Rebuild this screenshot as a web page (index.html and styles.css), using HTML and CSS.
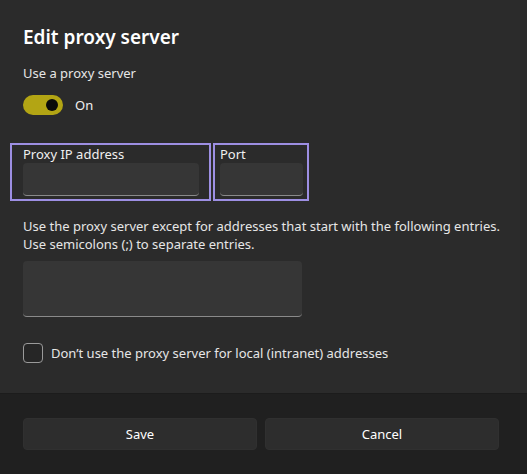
FILE: index.html
```html
<!DOCTYPE html>
<html>
<head>
<meta charset="utf-8">
<link rel="stylesheet" href="styles.css">
</head>
<body>
<div class="dialog">
  <div class="content">
    <h1 class="title">Edit proxy server</h1>
    <div class="label">Use a proxy server</div>
    <div class="toggle-row">
      <span class="toggle"><span class="knob"></span></span>
      <span class="toggle-text">On</span>
    </div>
    <div class="fields">
      <div class="field field-ip">
        <div class="field-label">Proxy IP address</div>
        <div class="input"></div>
      </div>
      <div class="field field-port">
        <div class="field-label">Port</div>
        <div class="input"></div>
      </div>
    </div>
    <p class="desc">Use the proxy server except for addresses that start with the following entries.<br>Use semicolons (;) to separate entries.</p>
    <div class="input textarea"></div>
    <div class="check-row">
      <span class="checkbox"></span>
      <span class="check-text">Don’t use the proxy server for local (intranet) addresses</span>
    </div>
  </div>
  <div class="footer">
    <div class="btn">Save</div>
    <div class="btn">Cancel</div>
  </div>
</div>
</body>
</html>
```

FILE: styles.css
```css
html, body {
  margin: 0;
  padding: 0;
  background: #2b2b2b;
}
body {
  font-family: "Noto Sans", "Open Sans", sans-serif;
  color: #ffffff;
  font-size: 13px;
}
.dialog {
  width: 527px;
  height: 474px;
  display: flex;
  flex-direction: column;
  background: #2b2b2b;
}
.content {
  flex: 1;
  padding: 22px 23px 0 23px;
  display: flex;
  flex-direction: column;
  align-items: flex-start;
}
.title {
  margin: 0;
  font-size: 19px;
  font-weight: 600;
  line-height: 30px;
  color: #ffffff;
}
.label {
  margin-top: 12px;
  line-height: 18px;
  color: #e6e6e6;
}
.toggle-row {
  margin-top: 13px;
  display: flex;
  align-items: center;
  gap: 12px;
}
.toggle {
  width: 40px;
  height: 20px;
  border-radius: 10px;
  background: #b3a514;
  display: flex;
  align-items: center;
  justify-content: flex-end;
  padding-right: 5px;
  box-sizing: border-box;
}
.knob {
  width: 12px;
  height: 12px;
  border-radius: 50%;
  background: #0a0a0a;
}
.toggle-text {
  line-height: 20px;
  color: #f0f0f0;
}
.fields {
  margin-top: 28px;
  margin-left: -13px;
  display: flex;
  gap: 2px;
}
.field {
  border: 2px solid #9d8fe3;
  display: flex;
  flex-direction: column;
  padding-bottom: 3px;
}
.field-ip {
  width: 201px;
  padding-left: 11px;
  padding-right: 10px;
  box-sizing: border-box;
}
.field-port {
  width: 96px;
  padding-left: 5px;
  padding-right: 4px;
  box-sizing: border-box;
}
.field-label {
  line-height: 18px;
  color: #f0f0f0;
}
.input {
  height: 33px;
  background: #363636;
  border-radius: 4px;
  border-bottom: 1px solid #8a8a8a;
  box-sizing: border-box;
}
.field .input {
  width: 100%;
}
.desc {
  margin: 16px 0 0 0;
  line-height: 18px;
  color: #e6e6e6;
}
.textarea {
  margin-top: 8px;
  width: 279px;
  height: 56px;
}
.check-row {
  margin-top: 26px;
  display: flex;
  align-items: center;
  gap: 8px;
}
.checkbox {
  width: 20px;
  height: 20px;
  box-sizing: border-box;
  border: 1px solid #9a9a9a;
  border-radius: 4px;
  background: #262626;
}
.check-text {
  color: #e6e6e6;
}
.footer {
  height: 81px;
  background: #202020;
  border-top: 1px solid #1c1c1c;
  box-sizing: border-box;
  display: flex;
  gap: 8px;
  padding: 24px 28px 0 23px;
}
.btn {
  flex: 1;
  height: 32px;
  border-radius: 4px;
  background: #2d2d2d;
  border: 1px solid #303030;
  box-sizing: border-box;
  display: flex;
  align-items: center;
  justify-content: center;
  color: #ffffff;
}
```
